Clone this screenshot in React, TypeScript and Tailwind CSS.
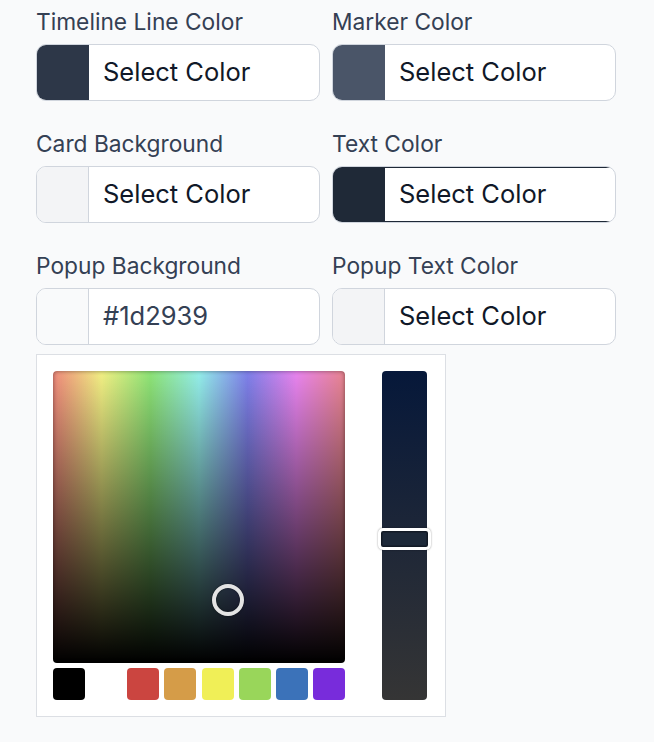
import React from 'react'

type Field = {
  label: string
  swatch: string
  value?: string
  divider?: boolean
  active?: boolean
}

const fields: Field[] = [
  { label: 'Timeline Line Color', swatch: '#2d3748' },
  { label: 'Marker Color', swatch: '#4a5568' },
  { label: 'Card Background', swatch: '#f3f4f6', divider: true },
  { label: 'Text Color', swatch: '#1f2937', active: true },
  { label: 'Popup Background', swatch: '#f9fafb', value: '#1d2939', divider: true },
  { label: 'Popup Text Color', swatch: '#f3f4f6', divider: true },
]

const presets = ['#000000', '#ffffff', '#cb4540', '#d59c48', '#f0ef57', '#99d65a', '#3b72b9', '#782cdb']

function ColorField({ field }: { field: Field }) {
  return (
    <div className="flex flex-col">
      <label className="mb-[6px] text-[22.75px] leading-[32px] text-[#344054]">{field.label}</label>
      <div className="flex h-[57px] overflow-hidden rounded-[10px] border border-[#d0d5dd] bg-white">
        <div
          className={
            field.divider
              ? 'w-[52px] shrink-0 border-r border-[#d0d5dd]'
              : 'w-[52px] shrink-0'
          }
          style={{ backgroundColor: field.swatch }}
        />
        <div
          className={
            field.active
              ? 'flex flex-1 items-center border-y border-[#1f2937] px-[14px]'
              : 'flex flex-1 items-center px-[14px]'
          }
        >
          {field.value ? (
            <span className="text-[25.5px] text-[#344054]">{field.value}</span>
          ) : (
            <span className="text-[25.5px] text-[#101828]">Select Color</span>
          )}
        </div>
      </div>
    </div>
  )
}

function Picker() {
  return (
    <div className="mt-[9px] flex w-[410px] gap-[37px] border border-[#dcdfe4] bg-white pb-[16px] pl-[16px] pr-[18px] pt-[16px]">
      <div className="flex w-[292px] flex-col gap-[5px]">
        {/* hue x value, saturation fixed from the slider */}
        <div className="relative h-[292px] w-[292px] rounded-[4px] bg-[linear-gradient(to_bottom,rgba(0,0,0,0),#000),linear-gradient(to_right,#f08a7c,#f2f084,#8ee477,#94eeea,#7f80ea,#e884ee,#e8848e)] shadow-[inset_0_0_4px_rgba(0,0,0,0.45)]">
          <div className="absolute left-[159px] top-[213px] h-[32px] w-[32px] rounded-full border-[4px] border-[#e4e4e4] shadow-[0_0_2px_rgba(0,0,0,0.6),inset_0_0_2px_rgba(0,0,0,0.5)]" />
        </div>
        <div className="flex justify-between">
          {presets.map((c) => (
            <div key={c} className="h-[32px] w-[32px] rounded-[4px]" style={{ backgroundColor: c }} />
          ))}
        </div>
      </div>
      <div className="relative h-[329px] w-[45px] rounded-[4px] bg-[linear-gradient(to_bottom,#06183a,#353535)]">
        <div className="absolute -left-[4px] -right-[4px] top-[157px] h-[22px] rounded-[5px] border-[3px] border-white bg-[#1d2939] shadow-[0_0_2px_rgba(0,0,0,0.4),inset_0_0_0_1.5px_rgba(0,0,0,0.35)]" />
      </div>
    </div>
  )
}

export default function App() {
  return (
    <div className="min-h-[742px] bg-[#f9fafb] px-[36px] pt-[6px] font-['Inter',sans-serif]">
      <div className="grid w-[580px] grid-cols-2 gap-x-[12px] gap-y-[27px]">
        {fields.map((f) => (
          <ColorField key={f.label} field={f} />
        ))}
      </div>
      <Picker />
    </div>
  )
}
